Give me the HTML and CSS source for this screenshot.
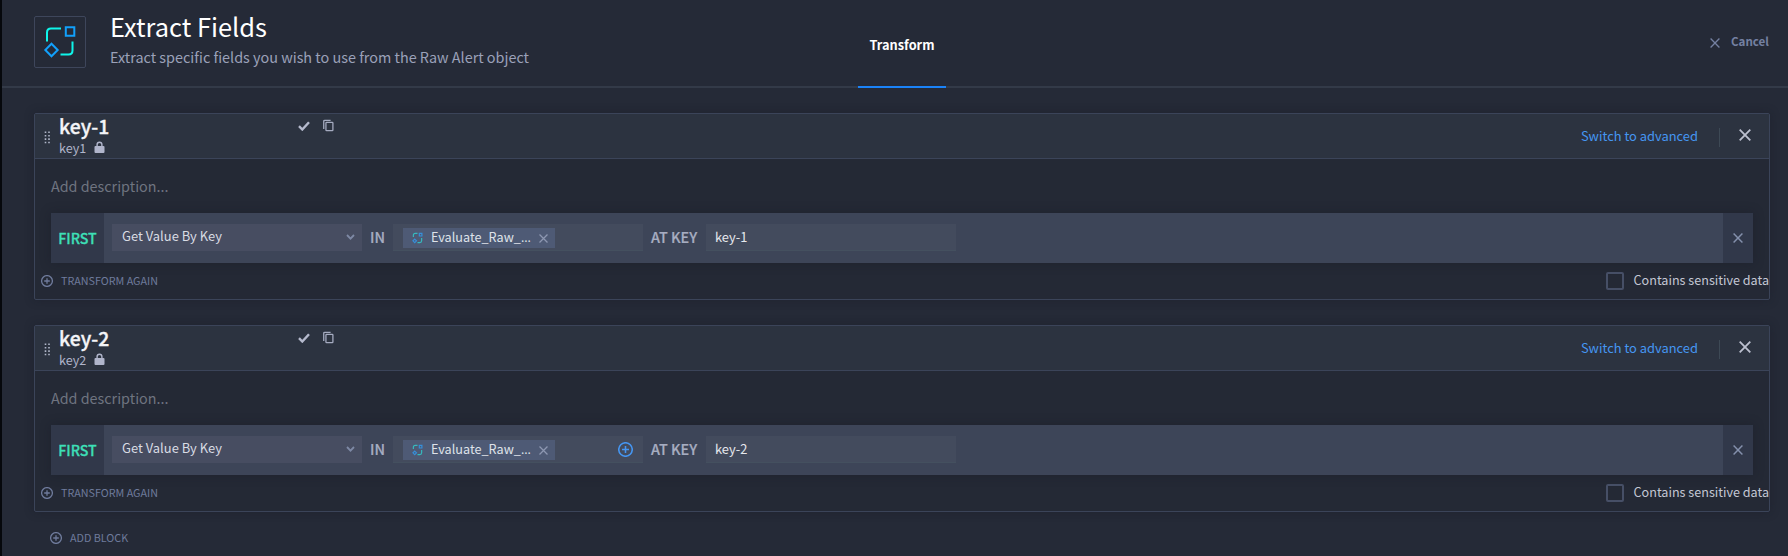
FILE: index.html
```html
<!DOCTYPE html>
<html lang="en">
<head>
<meta charset="utf-8">
<title>Extract Fields</title>
<link rel="stylesheet" href="styles.css">
</head>
<body>
<svg class="defs" width="0" height="0">
  <symbol id="plus" viewBox="0 0 12 12"><circle cx="6" cy="6" r="5.4"/><path d="M6 3.2v5.6M3.2 6h5.6"/></symbol>
  <symbol id="x" viewBox="0 0 12 12"><path d="M.7 .7l10.600 10.600M11.300 .7L.7 11.300"/></symbol>
  <symbol id="check" viewBox="0 0 12 10"><path d="M1 5.2l3.3 3.3L11 1.2"/></symbol>
  <symbol id="copy" viewBox="0 0 12 13"><path d="M8.3 .8H2Q.8 .8 .8 2v8.2"/><rect x="3.2" y="3.1" width="7.6" height="9.1" rx=".8"/></symbol>
  <symbol id="lock" viewBox="0 0 11 12"><path d="M2.4 5V3.600a3.1 3.1 0 0 1 6.2 0V5H9.5q1 0 1 1v5q0 1-1 1h-8q-1 0-1-1V6q0-1 1-1zM3.8 5h3.4V3.600a1.7 1.7 0 0 0-3.4 0z"/></symbol>
  <symbol id="chevron" viewBox="0 0 9 6"><path d="M1 1l3.5 3.6L8 1"/></symbol>
  <symbol id="flow" viewBox="0 0 34 34"><path class="flow-line" d="M4 16.5V7.5q0-4 4-4h10M29.5 16.5v9q0 4-4 4H17.500"/><path class="flow-shape" d="M22.800 2.300h8.500v8.500h-8.500zM8.500 18.700l6.200 6.300-6.200 6.300L2.300 25z"/></symbol>
  <symbol id="flow-small" viewBox="0 0 12 12"><path class="small-line" d="M1.500 5V3q0-2 2-2H6M10.500 6v3q0 2-2 2H6"/><path class="small-shape" d="M8 1h2.800v2.800H8zM3 7.200L4.900 9.100 3 11 1.100 9.100z"/></symbol>
  <symbol id="grip" viewBox="0 0 7 13"><path d="M1.500 .500v12M5 .500v12"/></symbol>
</svg>

<header class="header">
  <div class="logo"><svg class="logo-icon"><use href="#flow"/></svg></div>
  <div class="heading">
    <h1 class="title">Extract Fields</h1>
    <p class="subtitle">Extract specific fields you wish to use from the Raw Alert object</p>
  </div>
  <nav class="tab">Transform</nav>
  <div class="cancel"><svg class="cancel-x line"><use href="#x"/></svg><span>Cancel</span></div>
</header>

<main class="content">
  <section class="card">
    <div class="card-head">
      <svg class="grip"><use href="#grip"/></svg>
      <div class="names">
        <h2 class="key-name">key-1</h2>
        <div class="key-id"><span>key1</span><svg class="lock"><use href="#lock"/></svg></div>
      </div>
      <svg class="check line"><use href="#check"/></svg>
      <svg class="copy line"><use href="#copy"/></svg>
      <span class="switch">Switch to advanced</span>
      <span class="divider"></span>
      <svg class="card-x line"><use href="#x"/></svg>
    </div>
    <p class="description">Add description...</p>
    <div class="row">
      <div class="first">FIRST</div>
      <div class="fields">
        <div class="select"><span>Get Value By Key</span><svg class="chevron line"><use href="#chevron"/></svg></div>
        <span class="word word-in">IN</span>
        <div class="field chips"><div class="chip"><svg class="chip-icon"><use href="#flow-small"/></svg><span class="chip-text">Evaluate_Raw_<span class="dots">…</span></span><svg class="chip-x line"><use href="#x"/></svg></div></div>
        <span class="word word-at">AT KEY</span>
        <div class="field input">key-1</div>
      </div>
      <div class="remove"><svg class="remove-x line"><use href="#x"/></svg></div>
    </div>
    <div class="card-foot">
      <div class="action"><svg class="plus line"><use href="#plus"/></svg><span>TRANSFORM AGAIN</span></div>
      <div class="sensitive"><span class="box"></span><span>Contains sensitive data</span></div>
    </div>
  </section>

  <section class="card">
    <div class="card-head">
      <svg class="grip"><use href="#grip"/></svg>
      <div class="names">
        <h2 class="key-name">key-2</h2>
        <div class="key-id"><span>key2</span><svg class="lock"><use href="#lock"/></svg></div>
      </div>
      <svg class="check line"><use href="#check"/></svg>
      <svg class="copy line"><use href="#copy"/></svg>
      <span class="switch">Switch to advanced</span>
      <span class="divider"></span>
      <svg class="card-x line"><use href="#x"/></svg>
    </div>
    <p class="description">Add description...</p>
    <div class="row">
      <div class="first">FIRST</div>
      <div class="fields">
        <div class="select"><span>Get Value By Key</span><svg class="chevron line"><use href="#chevron"/></svg></div>
        <span class="word word-in">IN</span>
        <div class="field chips"><div class="chip"><svg class="chip-icon"><use href="#flow-small"/></svg><span class="chip-text">Evaluate_Raw_<span class="dots">…</span></span><svg class="chip-x line"><use href="#x"/></svg></div><svg class="add line"><use href="#plus"/></svg></div>
        <span class="word word-at">AT KEY</span>
        <div class="field input">key-2</div>
      </div>
      <div class="remove"><svg class="remove-x line"><use href="#x"/></svg></div>
    </div>
    <div class="card-foot">
      <div class="action"><svg class="plus line"><use href="#plus"/></svg><span>TRANSFORM AGAIN</span></div>
      <div class="sensitive"><span class="box"></span><span>Contains sensitive data</span></div>
    </div>
  </section>
  <div class="action add-block"><svg class="plus line"><use href="#plus"/></svg><span>ADD BLOCK</span></div>
</main>
</body>
</html>
```
FILE: styles.css
```css
* { box-sizing: border-box; margin: 0; padding: 0; }
body {
  height: 556px;
  overflow: hidden;
  border-left: 2px solid #06080c;
  background: #252a37;
  color: #d9dce4;
  font: 400 12.7px "Noto Sans CJK SC", "Noto Sans", sans-serif;
  white-space: nowrap;
}
svg { display: block; flex: none; }
.defs { position: absolute; }
.line { fill: none; stroke: currentColor; overflow: visible; }

.header {
  display: grid;
  grid-template-columns: 52px 772px 88px 1fr;
  height: 88px;
  padding-left: 32px;
  border-bottom: 2px solid #333a48;
}
.logo {
  width: 52px;
  height: 52px;
  margin-top: 16px;
  padding: 8px;
  border: 1px solid #3e465b;
  border-radius: 2px;
}
.logo-icon { width: 34px; height: 34px; }
.flow-line { fill: none; stroke: #0ff5ea; stroke-width: 2; }
.flow-shape { fill: none; stroke: #12a0fb; stroke-width: 2; }
.heading { padding: 8px 0 0 24px; }
.title { color: #fff; font-size: 25.4px; font-weight: 400; line-height: 36px; }
.subtitle { color: #9ba1b9; font-size: 14.4px; line-height: 26px; }
.tab {
  height: 88px;
  border-bottom: 2px solid #1b83f8;
  color: #fff;
  font-size: 12.76px;
  font-weight: 700;
  line-height: 90px;
  text-align: center;
}
.cancel {
  display: flex;
  justify-content: flex-end;
  gap: 11px;
  padding: 30px 19px 0 0;
  color: #7480a1;
  font-size: 11.6px;
  font-weight: 700;
  line-height: 22px;
}
.cancel-x { width: 10px; height: 10px; margin-top: 8px; stroke-width: 1.6; }

.content { padding: 25px 18px 0 32px; }
.card {
  height: 187px;
  margin-bottom: 25px;
  border: 1px solid #3b4459;
  border-radius: 2px;
  background: #242935;
  box-shadow: 0 0 10px rgba(20, 23, 34, .35);
}
.card-head {
  display: flex;
  height: 45px;
  padding-left: 9px;
  border-bottom: 1px solid #3b4459;
  background: #2c3340;
}
.grip { width: 7px; height: 13px; margin-top: 17px; fill: none; stroke: #b0b6c8; stroke-width: 1.6; stroke-dasharray: 1.6 1.8; }
.names { width: 239px; padding-left: 8px; }
.key-name { color: #f4f5f8; font-size: 19.4px; font-weight: 500; line-height: 24px; -webkit-text-stroke: .35px; }
.key-id { display: flex; gap: 8px; color: #b0b5cb; font-size: 12.6px; line-height: 19px; }
.lock { width: 11px; height: 12px; margin-top: 3px; fill: #b0b5cb; fill-rule: evenodd; }
.check { width: 12px; height: 10px; margin: 7px 13px 0 8px; color: #b5bacd; stroke-width: 2.4; }
.copy { width: 11px; height: 13px; margin-top: 5px; color: #a5abc0; stroke-width: 1.4; }
.switch { margin-left: auto; color: #4596f2; font-size: 12.9px; line-height: 43px; }
.divider { width: 1px; height: 19px; margin: 14px 19px 0 21px; background: #3d4955; }
.card-x { width: 12px; height: 12px; margin: 15px 18px 0 0; color: #bcc0cf; stroke-width: 1.8; }
.description { padding: 17px 0 17px 16px; color: #6f7480; font-size: 14.35px; line-height: 20px; }
.row {
  display: grid;
  grid-template-columns: 53px 1fr 30px;
  height: 50px;
  margin: 0 16px;
  background: #3d4558;
  box-shadow: 0 0 10px rgba(20, 23, 34, .35);
}
.first { background: #31384a; color: #3ddfb6; font-size: 14.2px; font-weight: 500; line-height: 50px; text-align: center; -webkit-text-stroke: .3px; }
.fields { display: flex; padding: 11px 0 0 8px; }
.select {
  display: flex;
  justify-content: space-between;
  width: 250px;
  height: 27px;
  padding: 0 7px 0 10px;
  background: #474d61;
  font-size: 12.95px;
  line-height: 24px;
}
.chevron { width: 9px; height: 6px; margin-top: 10px; color: #7e89a5; stroke-width: 1.8; }
.word { color: #a7adc1; font-size: 14.4px; font-weight: 500; line-height: 25px; -webkit-text-stroke: .2px; }
.word-in { width: 31px; padding-left: 8px; }
.word-at { width: 63px; padding-left: 8px; }
.field { width: 250px; height: 27px; border-bottom: 1px solid #44505f; background: #434b5d; }
.chips { display: flex; padding: 4px 10px 0; }
.chip { display: flex; width: 152px; height: 20px; padding-left: 9px; background: #4e5a75; color: #dfe2e9; }
.chip-icon { width: 11px; height: 12px; margin-top: 4px; fill: none; stroke-width: 1.3; }
.small-line { stroke: #36b9bd; }
.small-shape { stroke: #368fda; }
.chip-text { width: 109px; padding-left: 8px; font-size: 12.65px; line-height: 18px; }
.dots { font-family: "Open Sans", sans-serif; }
.chip-x { width: 9px; height: 9px; margin: 6px 0 0 7px; color: #8d97b1; stroke-width: 1.7; }
.add { width: 15px; height: 15px; margin: 2px 0 0 auto; color: #4596f2; stroke-width: 1.25; }
.input { padding-left: 9px; color: #e6e8ed; font-size: 12.9px; line-height: 25px; }
.remove { display: grid; place-items: center; background: #31384a; color: #8490ac; }
.remove-x { width: 10px; height: 10px; stroke-width: 1.8; }
.card-foot { display: flex; justify-content: space-between; padding-left: 6px; }
.action { display: flex; gap: 8px; color: #6f7b9c; font-size: 10.75px; line-height: 35px; }
.plus { width: 12px; height: 12px; margin-top: 12px; stroke-width: 1.3; }
.sensitive { display: flex; gap: 10px; color: #c3c7d4; font-size: 12.6px; line-height: 34px; }
.box { width: 18px; height: 18px; margin-top: 9px; border: 2px solid #464f66; border-radius: 2px; }
.add-block { margin-top: -17px; padding-left: 16px; }
```
